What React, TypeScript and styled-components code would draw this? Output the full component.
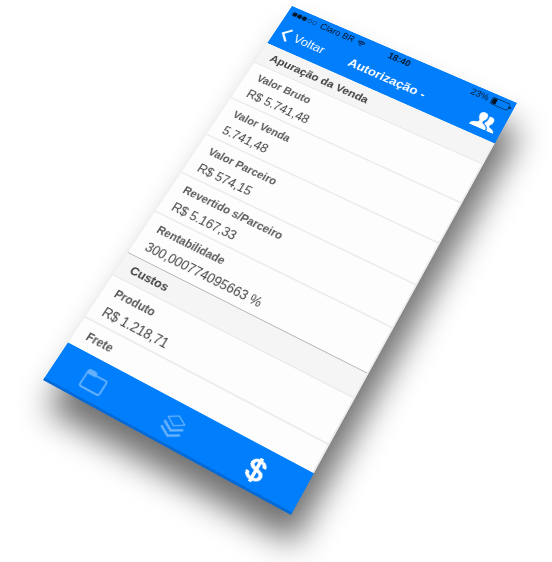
import React from "react";
import styled, { createGlobalStyle, css } from "styled-components";
import { IoLogoUsd } from "react-icons/io";

type Point = [number, number];

const DEVICE_WIDTH = 320;
const DEVICE_HEIGHT = 568;

/* Corners of the tilted screen, measured from the centre of the stage. */
const CORNERS: Point[] = [
  [16, -275],
  [241, -178],
  [15, 234],
  [-233, 99],
];

/* Perspective matrix that carries a w × h box onto a four-cornered plane. */
function planeMatrix(w: number, h: number, corners: Point[]): string {
  const [[x0, y0], [x1, y1], [x2, y2], [x3, y3]] = corners.map(
    ([x, y]): Point => [x + w / 2, y + h / 2]
  );
  const dx1 = x1 - x2;
  const dx2 = x3 - x2;
  const dx3 = x0 - x1 + x2 - x3;
  const dy1 = y1 - y2;
  const dy2 = y3 - y2;
  const dy3 = y0 - y1 + y2 - y3;
  const det = dx1 * dy2 - dx2 * dy1;
  const g = (dx3 * dy2 - dx2 * dy3) / det;
  const k = (dx1 * dy3 - dx3 * dy1) / det;
  const m = [
    (x1 - x0 + g * x1) / w, (y1 - y0 + g * y1) / w, 0, g / w,
    (x3 - x0 + k * x3) / h, (y3 - y0 + k * y3) / h, 0, k / h,
    0, 0, 1, 0,
    x0, y0, 0, 1,
  ];
  return `matrix3d(${m.map((n) => n.toFixed(8)).join(",")})`;
}

const GlobalStyle = createGlobalStyle`
  * { box-sizing: border-box; }
  body {
    margin: 0;
    background: #fff;
    font-family: "Liberation Sans", Arial, sans-serif;
  }
  button {
    font: inherit;
    color: inherit;
    background: none;
    border: 0;
    padding: 0;
    cursor: pointer;
  }
`;

const Stage = styled.main`
  display: grid;
  place-content: center;
  height: 100vh;
  overflow: hidden;
`;

const tiltedPlane = css`
  width: ${DEVICE_WIDTH}px;
  height: ${DEVICE_HEIGHT}px;
  transform-origin: 0 0;
  transform: ${planeMatrix(DEVICE_WIDTH, DEVICE_HEIGHT, CORNERS)};
`;

const ShadowLayer = styled.div`
  grid-area: 1 / 1;
  filter: blur(16px);
  transform: translate(3px, 29px);
`;

const Shadow = styled.div`
  ${tiltedPlane}
  background: rgba(0, 0, 0, 0.56);
`;

const Phone = styled.article`
  ${tiltedPlane}
  grid-area: 1 / 1;
  display: flex;
  flex-direction: column;
  overflow: hidden;
  background: #fdfdfd;
  outline: 1px solid transparent;
`;

const StatusBar = styled.div`
  display: grid;
  grid-template-columns: 1fr auto 1fr;
  align-items: center;
  height: 20px;
  padding: 0 3px 0 6px;
  background: #007efb;
  color: #06182c;
  font-size: 12px;
`;

const StatusGroup = styled.div<{ $end?: boolean }>`
  display: flex;
  align-items: center;
  justify-content: ${(p) => (p.$end ? "flex-end" : "flex-start")};
  gap: 4px;
`;

const Clock = styled.time`
  font-weight: bold;
`;

const NavBar = styled.header`
  display: grid;
  grid-template-columns: 1fr auto 1fr;
  align-items: center;
  height: 44px;
  padding: 0 8px;
  background: #007efb;
  color: #fff;
  font-size: 17px;
`;

const BackButton = styled.button`
  display: flex;
  align-items: center;
  justify-self: start;
  gap: 6px;
`;

const Title = styled.h1`
  margin: 0;
  font-size: 17px;
  font-weight: bold;
`;

const PeopleButton = styled.button`
  display: flex;
  justify-self: end;
`;

const Content = styled.div`
  flex: 1;
  min-height: 0;
  overflow: hidden;
  border-right: 2px solid #ececec;
`;

const SectionTitle = styled.h2<{ $ruled?: boolean }>`
  display: flex;
  align-items: center;
  height: 33px;
  margin: 0;
  padding: 0 15px;
  background: #f5f5f5;
  border-top: ${(p) => (p.$ruled ? "1px solid #b4b4b4" : "0")};
  border-bottom: 1px solid #e4e4e4;
  color: #404040;
  font-size: 15px;
  font-weight: bold;
`;

const Fields = styled.dl`
  margin: 0;
`;

const Field = styled.div`
  height: 59px;
  padding: 8px 15px 0;
  border-bottom: 2px solid #ececec;
  &:last-child { border-bottom: 0; }
`;

const FieldName = styled.dt`
  color: #5a5a5a;
  font-size: 14px;
  font-weight: bold;
  line-height: 18px;
`;

const FieldValue = styled.dd`
  margin: 5px 0 0;
  color: #444;
  font-size: 16px;
  line-height: 24px;
`;

const TabBar = styled.nav`
  display: grid;
  grid-template-columns: repeat(3, 1fr);
  height: 50px;
  padding: 2px 4px 0 0;
  background: #007efb;
  box-shadow: inset 0 -3px #006ad8;
`;

const Tab = styled.button<{ $active?: boolean }>`
  display: flex;
  align-items: center;
  justify-content: center;
  color: #fff;
  opacity: ${(p) => (p.$active ? 1 : 0.4)};
`;

const SignalIcon = () => (
  <svg width="38" height="8" viewBox="0 0 38 8" aria-hidden="true">
    {[4, 11, 18].map((x) => (
      <circle key={x} cx={x} cy="4" r="3.2" fill="#06182c" />
    ))}
    {[26, 33].map((x) => (
      <circle key={x} cx={x} cy="4" r="2.6" fill="none" stroke="#0d3f78" strokeWidth="0.9" />
    ))}
  </svg>
);

const WifiIcon = () => (
  <svg width="12" height="9" viewBox="0 0 13 10" fill="none" stroke="#06182c" strokeWidth="1.7" aria-hidden="true">
    <path d="M1 3.6Q6.5-.8 12 3.6M3 6Q6.500 3 10 6" />
    <path d="M6.500 9.500 4.800 7.600Q6.500 6.400 8.200 7.600Z" fill="#06182c" stroke="none" />
  </svg>
);

const BatteryIcon = () => (
  <svg width="27" height="11" viewBox="0 0 27 11" aria-hidden="true">
    <rect x=".5" y=".5" width="23" height="10" rx="1.800" fill="none" stroke="#06305f" />
    <rect x="1.500" y="1.500" width="5.500" height="8" fill="#06121f" />
    <path d="M24.500 3.500q2 .3 2 2t-2 2z" fill="#06182c" />
  </svg>
);

const ChevronIcon = () => (
  <svg width="13" height="22" viewBox="0 0 13 22" fill="none" stroke="#fff" strokeWidth="3" aria-hidden="true">
    <path d="M11.500 1.500 2.500 11l9 9.500" />
  </svg>
);

const PeopleIcon = () => (
  <svg width="32" height="26" viewBox="0 0 32 26" fill="#fff" aria-hidden="true">
    <path d="M11.500 1C8 1 6 3.500 6.300 7c.2 2.800 1.200 4.800 2.700 6.200.5 2.300-.3 3-2 3.700C3.500 18.300 0 19 0 24h21.500c0-4.500-2-5.600-5.500-7.100-1.500-.7-2.500-1.400-2-3.700 1.500-1.400 2.500-3.400 2.700-6.200C17 3.500 15 1 11.500 1Z" />
    <path d="M21 3.500c3.800 0 5.400 2.500 5.100 6-.2 2.500-1.100 4.200-2.400 5.400-.4 2 .3 2.500 1.700 3.100 3.300 1.400 6.600 2 6.600 6h-8.700c-.2-4-1.800-6-5.300-7.600-1.300-.6-1.500-1.200-1.200-2.400 1.400-1.800 2.200-4.200 2-7.700L18.200 4.400Q19.400 3.500 21 3.500Z" />
  </svg>
);

const FolderIcon = () => (
  <svg width="29" height="26" viewBox="0 0 30 26" fill="none" stroke="#fff" strokeWidth="2.200" strokeLinejoin="round" aria-hidden="true">
    <path d="M1.500 21V4.500q0-2.500 2.500-2.500h6q1.500 0 2.200 1.500L13 5h13q2.500 0 2.500 2.500V21q0 2.500-2.500 2.500H4q-2.500 0-2.500-2.500Z" />
    <path d="M2 7V4.500Q2 2.500 4 2.500h6q1.500 0 2 1.500l1.200 3Z" fill="#fff" stroke="none" />
  </svg>
);

const LayersIcon = () => (
  <svg width="28" height="29" viewBox="0 0 30 30" fill="none" stroke="#fff" strokeLinejoin="round" strokeLinecap="round" aria-hidden="true">
    <path d="M15 1.500 26.500 8 15 14.500 3.500 8Z" strokeWidth="1.500" />
    <path d="m3 14.500 12 6.500 12-6.500M3 21.500 15 28l12-6.500" strokeWidth="3" />
  </svg>
);

interface Entry {
  name: string;
  value?: string;
}

const SALE: Entry[] = [
  { name: "Valor Bruto", value: "R$ 5.741,48" },
  { name: "Valor Venda", value: "5.741,48" },
  { name: "Valor Parceiro", value: "R$ 574,15" },
  { name: "Revertido s/Parceiro", value: "R$ 5.167,33" },
  { name: "Rentabilidade", value: "300,000774095663 %" },
];

const COSTS: Entry[] = [
  { name: "Produto", value: "R$ 1.218,71" },
  { name: "Frete" },
];

const FieldList = ({ entries }: { entries: Entry[] }) => (
  <Fields>
    {entries.map(({ name, value }) => (
      <Field key={name}>
        <FieldName>{name}</FieldName>
        {value && <FieldValue>{value}</FieldValue>}
      </Field>
    ))}
  </Fields>
);

export default function App() {
  return (
    <>
      <GlobalStyle />
      <Stage>
        <ShadowLayer aria-hidden="true">
          <Shadow />
        </ShadowLayer>
        <Phone>
          <StatusBar>
            <StatusGroup>
              <SignalIcon />
              <span>Claro BR</span>
              <WifiIcon />
            </StatusGroup>
            <Clock>18:40</Clock>
            <StatusGroup $end>
              <span>23%</span>
              <BatteryIcon />
            </StatusGroup>
          </StatusBar>
          <NavBar>
            <BackButton type="button">
              <ChevronIcon />
              Voltar
            </BackButton>
            <Title>Autorização -</Title>
            <PeopleButton type="button" aria-label="Parceiros">
              <PeopleIcon />
            </PeopleButton>
          </NavBar>
          <Content>
            <SectionTitle>Apuração da Venda</SectionTitle>
            <FieldList entries={SALE} />
            <SectionTitle $ruled>Custos</SectionTitle>
            <FieldList entries={COSTS} />
          </Content>
          <TabBar>
            <Tab type="button" aria-label="Pasta">
              <FolderIcon />
            </Tab>
            <Tab type="button" aria-label="Itens">
              <LayersIcon />
            </Tab>
            <Tab type="button" aria-label="Valores" $active>
              <IoLogoUsd size={32} />
            </Tab>
          </TabBar>
        </Phone>
      </Stage>
    </>
  );
}
